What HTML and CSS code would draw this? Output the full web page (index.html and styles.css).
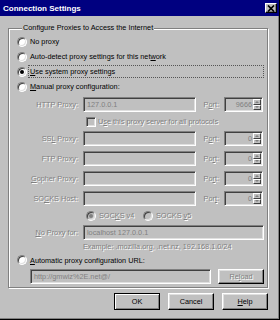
FILE: index.html
```html
<!DOCTYPE html>
<html>
<head>
<meta charset="utf-8">
<title>Connection Settings</title>
<link rel="stylesheet" href="styles.css">
</head>
<body>
<div class="window">
  <div class="titlebar">
    <span class="title">Connection Settings</span>
    <span class="close"><svg width="8" height="7" viewBox="0 0 8 7"><path d="M1 0.5l6 6M7 0.5l-6 6" stroke="#000" stroke-width="1.7"/></svg></span>
  </div>
  <div class="content">
    <fieldset class="group">
      <legend>Configure Proxies to Access the Internet</legend>
      <div class="option"><span class="radio"></span><span class="text">No proxy</span></div>
      <div class="option"><span class="radio"></span><span class="text">Auto-detect proxy settings for this net<u>w</u>ork</span></div>
      <div class="option"><span class="radio checked"></span><span class="focus"><u>U</u>se system proxy settings</span></div>
      <div class="option"><span class="radio"></span><span class="text"><u>M</u>anual proxy configuration:</span></div>

      <div class="proxy-row first">
        <span class="label off">HTTP Proxy:</span>
        <span class="field">127.0.0.1</span>
        <span class="label off">P<u>o</u>rt:</span>
        <span class="field port"><span class="num">9666</span><span class="spin"><i class="up"></i><i class="down"></i></span></span>
      </div>
      <div class="check-row">
        <span class="check"></span><span class="off">U<u>s</u>e this proxy server for all protocols</span>
      </div>
      <div class="proxy-row">
        <span class="label off">SS<u>L</u> Proxy:</span>
        <span class="field"></span>
        <span class="label off">P<u>o</u>rt:</span>
        <span class="field port"><span class="num">0</span><span class="spin"><i class="up"></i><i class="down"></i></span></span>
      </div>
      <div class="proxy-row gap">
        <span class="label off">FTP Proxy:</span>
        <span class="field"></span>
        <span class="label off">Po<u>r</u>t:</span>
        <span class="field port"><span class="num">0</span><span class="spin"><i class="up"></i><i class="down"></i></span></span>
      </div>
      <div class="proxy-row gap">
        <span class="label off"><u>G</u>opher Proxy:</span>
        <span class="field"></span>
        <span class="label off">Po<u>r</u>t:</span>
        <span class="field port"><span class="num">0</span><span class="spin"><i class="up"></i><i class="down"></i></span></span>
      </div>
      <div class="proxy-row gap">
        <span class="label off">SO<u>C</u>KS Host:</span>
        <span class="field"></span>
        <span class="label off">Por<u>t</u>:</span>
        <span class="field port"><span class="num">0</span><span class="spin"><i class="up"></i><i class="down"></i></span></span>
      </div>
      <div class="socks-row">
        <span class="socks v4"><span class="radio off checked"></span><span class="off">SOC<u>K</u>S v4</span></span>
        <span class="socks"><span class="radio off"></span><span class="off">SOCKS <u>v</u>5</span></span>
      </div>
      <div class="noproxy-row">
        <span class="label off"><u>N</u>o Proxy for:</span>
        <span class="field">localhost 127.0.0.1</span>
      </div>
      <div class="example off">Example: .mozilla.org, .net.nz, 192.168.1.0/24</div>
      <div class="option auto"><span class="radio"></span><span class="text"><u>A</u>utomatic proxy configuration URL:</span></div>
      <div class="url-row">
        <span class="field url">http://gmwiz%2E.net@/</span>
        <span class="button disabled">Re<u>l</u>oad</span>
      </div>
    </fieldset>
    <div class="buttons">
      <span class="button default">OK</span>
      <span class="button">Cancel</span>
      <span class="button"><u>H</u>elp</span>
    </div>
  </div>
</div>
</body>
</html>
```

FILE: styles.css
```css
* {
    box-sizing: border-box;
}

body {
    margin: 0;
    background: #c0c0c0;
    font-family: "Liberation Sans", Arial, sans-serif;
    font-size: 7.3px;
    color: #000;
}

.window {
    width: 280px;
    height: 320px;
    background: #c0c0c0;
    border-right: 1px solid #000;
    border-bottom: 1px solid #000;
    box-shadow: inset -1px -1px 0 #808080;
    display: flex;
    flex-direction: column;
}

.titlebar {
    height: 16px;
    background: #000080;
    color: #fff;
    display: flex;
    align-items: center;
    justify-content: space-between;
    padding: 0 2px 0 3px;
}

.title {
    font-weight: bold;
    font-size: 8px;
}

.close {
    width: 12px;
    height: 10px;
    background: #c0c0c0;
    border: 1px solid;
    border-color: #fff #000 #000 #fff;
    box-shadow: inset -1px -1px 0 #808080;
    display: flex;
    align-items: center;
    justify-content: center;
}

.content {
    padding: 6px 11px 0 8px;
    display: flex;
    flex-direction: column;
}

.group {
    margin: 0;
    padding: 0 3px 3px 8px;
    border: 1px solid #808080;
    box-shadow: 1px 1px 0 #fff, inset 1px 1px 0 #fff;
    min-width: 0;
}

.group legend {
    padding: 0 1px;
    margin-left: 5px;
    height: 12px;
    line-height: 12px;
    background: #c0c0c0;
}

.option {
    height: 15px;
    display: flex;
    align-items: center;
}

.option .text {
    margin-left: 3px;
}

.focus {
    flex: 1;
    margin-left: 1px;
    padding: 0 1px;
    border: 1px dotted #555;
    line-height: 11px;
}

.radio {
    width: 10px;
    height: 10px;
    flex: none;
    border-radius: 50%;
    background: #fff;
    border: 1px solid;
    border-color: #808080 #fff #fff #808080;
    box-shadow: inset 1px 1px 0 #404040, inset -1px -1px 0 #dfdfdf;
    display: flex;
    align-items: center;
    justify-content: center;
}

.radio.checked::after {
    content: "";
    width: 4px;
    height: 4px;
    border-radius: 50%;
    background: #000;
}

.radio.off {
    background: #c0c0c0;
}

.radio.off.checked::after {
    background: #808080;
}

.off {
    color: #808080;
    text-shadow: 1px 1px 0 #fff;
}

.proxy-row {
    display: grid;
    grid-template-columns: 61px 113px 18px 39px;
    column-gap: 5px;
    height: 15px;
    align-items: center;
}

.proxy-row.first {
    margin-top: 3px;
}

.proxy-row.gap {
    margin-top: 5px;
}

.label {
    text-align: right;
    white-space: nowrap;
}

.field {
    height: 15px;
    background: #c0c0c0;
    color: #808080;
    border: 1px solid;
    border-color: #808080 #fff #fff #808080;
    box-shadow: inset 1px 1px 0 #404040, inset -1px -1px 0 #dfdfdf;
    padding: 0 3px;
    line-height: 13px;
    white-space: nowrap;
    overflow: hidden;
}

.field.port {
    display: flex;
    justify-content: flex-end;
    align-items: center;
    padding: 1px 1px 1px 2px;
}

.num {
    margin-right: 1px;
}

.spin {
    width: 8px;
    height: 100%;
    display: flex;
    flex-direction: column;
}

.spin i {
    flex: 1;
    border: 1px solid;
    border-color: #fff #404040 #404040 #fff;
    background: #c0c0c0;
    display: flex;
    align-items: center;
    justify-content: center;
}

.spin i::after {
    content: "";
    border-left: 2px solid transparent;
    border-right: 2px solid transparent;
}

.spin .up::after {
    border-bottom: 2px solid #808080;
}

.spin .down::after {
    border-top: 2px solid #808080;
}

.check-row {
    height: 19px;
    display: flex;
    align-items: center;
    padding-left: 69px;
}

.check {
    width: 10px;
    height: 10px;
    margin-right: 2px;
    background: #c0c0c0;
    border: 1px solid;
    border-color: #808080 #fff #fff #808080;
    box-shadow: inset 1px 1px 0 #404040, inset -1px -1px 0 #dfdfdf;
}

.socks-row {
    height: 19px;
    display: flex;
    align-items: center;
    padding-left: 69px;
}

.socks {
    display: flex;
    align-items: center;
}

.socks .radio {
    margin-right: 3px;
}

.socks.v4 {
    width: 57px;
}

.noproxy-row {
    display: grid;
    grid-template-columns: 61px 181px;
    column-gap: 5px;
    align-items: center;
    height: 15px;
}

.example {
    height: 13px;
    line-height: 13px;
    padding-left: 66px;
    white-space: nowrap;
}

.option.auto {
    height: 14px;
}

.url-row {
    margin-top: 2px;
    display: flex;
    align-items: center;
    padding-left: 13px;
}

.field.url {
    width: 181px;
}

.button {
    height: 15px;
    display: flex;
    align-items: center;
    justify-content: center;
    background: #c0c0c0;
    border: 1px solid;
    border-color: #fff #000 #000 #fff;
    box-shadow: inset -1px -1px 0 #808080, inset 1px 1px 0 #dfdfdf;
}

.url-row .button {
    width: 46px;
    margin-left: 7px;
}

.button.disabled {
    color: #808080;
    text-shadow: 1px 1px 0 #fff;
}

.buttons {
    margin-top: 5px;
    display: flex;
    justify-content: flex-end;
    gap: 8px;
}

.buttons .button {
    width: 46px;
    height: 17px;
}

.button.default {
    outline: 1px solid #000;
    outline-offset: -1px;
    border-color: #000;
    box-shadow: inset 1px 1px 0 #fff, inset -1px -1px 0 #808080;
}
```
